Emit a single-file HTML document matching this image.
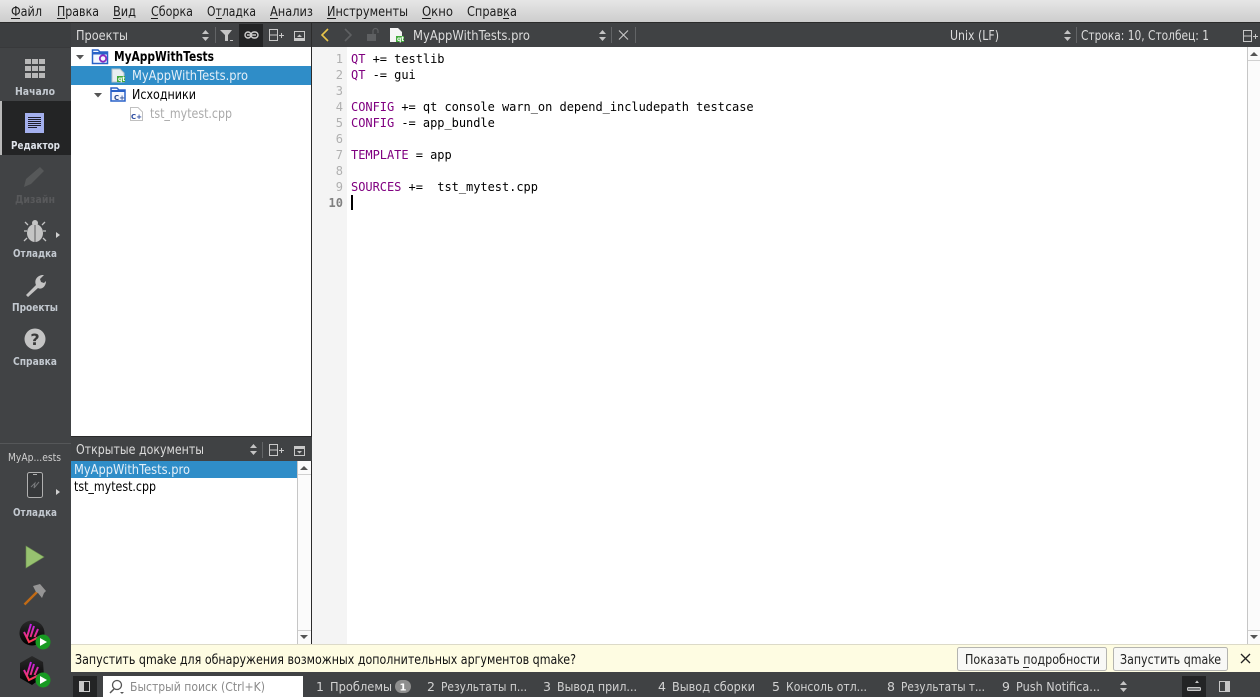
<!DOCTYPE html>
<html lang="ru"><head><meta charset="utf-8"><title>Qt Creator</title>
<style>
html,body{margin:0;padding:0;background:#fff;overflow:hidden}
svg{display:block;position:absolute;left:0;top:0}
text{font-family:"DejaVu Sans","Liberation Sans",sans-serif;font-size:13px;white-space:pre}
.m{fill:#1c1c1c}
.h{fill:#dcdcdc}
.l{fill:#c3c9d0;font-weight:bold;font-size:11px;text-anchor:start}
.c{font-family:"DejaVu Sans Mono","Liberation Mono",monospace;font-size:12px;fill:#000;letter-spacing:-.035px}
.k{fill:#800080}
.n{font-family:"DejaVu Sans Mono","Liberation Mono",monospace;font-size:12px;fill:#b0b0b0;text-anchor:end}
.s{fill:#d2d2d2;font-size:12.5px}
</style></head><body>
<svg width="1260" height="697" viewBox="0 0 1260 697" xmlns="http://www.w3.org/2000/svg">
<defs>
<linearGradient id="mb" x1="0" y1="0" x2="0" y2="1"><stop offset="0" stop-color="#e6e6e6"/><stop offset="1" stop-color="#cdcdcd"/></linearGradient>
<linearGradient id="lg" x1="0" y1="0" x2="0" y2="1"><stop offset="0" stop-color="#2a2a2a"/><stop offset="1" stop-color="#000"/></linearGradient>
<linearGradient id="kt" x1="0" y1="0" x2="0" y2="1"><stop offset="0" stop-color="#c020f0"/><stop offset="1" stop-color="#ff3a4a"/></linearGradient>
</defs>
<rect width="1260" height="697" fill="#fff"/>
<!-- menu -->
<rect width="1260" height="22" fill="url(#mb)"/>
<rect y="22" width="1260" height="1" fill="#2b2b2b"/>
<g class="m">
<text class="m" x="11" y="16" textLength="31" lengthAdjust="spacingAndGlyphs">Файл</text>
<text class="m" x="57" y="16" textLength="42" lengthAdjust="spacingAndGlyphs">Правка</text>
<text class="m" x="113" y="16" textLength="23" lengthAdjust="spacingAndGlyphs">Вид</text>
<text class="m" x="151" y="16" textLength="42" lengthAdjust="spacingAndGlyphs">Сборка</text>
<text class="m" x="207" y="16" textLength="49" lengthAdjust="spacingAndGlyphs">Отладка</text>
<text class="m" x="270" y="16" textLength="43" lengthAdjust="spacingAndGlyphs">Анализ</text>
<text class="m" x="327" y="16" textLength="81" lengthAdjust="spacingAndGlyphs">Инструменты</text>
<text class="m" x="422" y="16" textLength="31" lengthAdjust="spacingAndGlyphs">Окно</text>
<text class="m" x="467" y="16" textLength="50" lengthAdjust="spacingAndGlyphs">Справка</text>
<rect x="11" y="18" width="9" height="1"/><rect x="57" y="18" width="8" height="1"/><rect x="113" y="18" width="8" height="1"/><rect x="151" y="18" width="7" height="1"/><rect x="216" y="18" width="6" height="1"/><rect x="270" y="18" width="8" height="1"/><rect x="327" y="18" width="9" height="1"/><rect x="422" y="18" width="9" height="1"/><rect x="503" y="18" width="6" height="1"/>
</g>
<!-- sidebar -->
<rect y="23" width="71" height="674" fill="#414345"/>
<rect y="23" width="71" height="24" fill="#3c3e40"/>
<rect y="47" width="71" height="1" fill="#38393b"/>
<!-- home grid -->
<g fill="#b8b8b8">
<rect x="25" y="59" width="6" height="5"/><rect x="32" y="59" width="6" height="5"/><rect x="39" y="59" width="6" height="5"/>
<rect x="25" y="66" width="6" height="5"/><rect x="32" y="66" width="6" height="5"/><rect x="39" y="66" width="6" height="5"/>
<rect x="25" y="73" width="6" height="5"/><rect x="32" y="73" width="6" height="5"/><rect x="39" y="73" width="6" height="5"/>
</g>
<text class="l" x="15" y="95" textLength="40" lengthAdjust="spacingAndGlyphs">Начало</text>
<rect y="101" width="71" height="54" fill="#232425"/>
<rect y="101" width="2" height="54" fill="#b9b9b9"/>
<rect x="25" y="113" width="19" height="20" fill="#a4b0ee"/>
<g fill="#1d1d2b"><rect x="28" y="117" width="13" height="1"/><rect x="28" y="119" width="13" height="1"/><rect x="28" y="121" width="13" height="1"/><rect x="28" y="123" width="13" height="1"/><rect x="28" y="125" width="13" height="1"/><rect x="28" y="127" width="9" height="1"/></g>
<text class="l" x="11" y="149" textLength="49" lengthAdjust="spacingAndGlyphs" style="fill:#dfe3ea">Редактор</text>
<!-- design pencil -->
<path d="M24 187 L26 179 L40 167 L44 171 L31 184 Z" fill="#565859"/>
<text class="l" x="15" y="203" textLength="40" lengthAdjust="spacingAndGlyphs" style="fill:#58595b">Дизайн</text>
<!-- bug -->
<g fill="#c4c4c4"><ellipse cx="35" cy="233" rx="8" ry="9"/><circle cx="35" cy="223" r="3"/></g>
<path d="M35 225 V242" stroke="#414345" stroke-width=".8"/>
<path d="M28 225 L25 222 M27 231 H24 M27 238 L24 241 M42 225 L45 222 M43 231 H46 M43 238 L46 241" stroke="#c4c4c4" stroke-width="1.300" fill="none"/>
<path d="M56 232 L60 235 L56 238 Z" fill="#d0d0d0"/>
<text class="l" x="13" y="257" textLength="44" lengthAdjust="spacingAndGlyphs">Отладка</text>
<!-- wrench -->
<path d="M26 295 L36 285 C34 280 37 276 42 275 L44 275 L40 279 L41 282 L44 283 L46 281 C46 287 41 290 38 288 L28 297 Z" fill="#c4c4c4"/>
<text class="l" x="12" y="311" textLength="46" lengthAdjust="spacingAndGlyphs">Проекты</text>
<!-- help -->
<circle cx="35" cy="339" r="10.500" fill="#c4c4c4"/>
<text x="35" y="345" text-anchor="middle" style="font-size:16px;font-weight:bold;fill:#3a3a3a">?</text>
<text class="l" x="13" y="365" textLength="44" lengthAdjust="spacingAndGlyphs">Справка</text>
<rect y="443" width="71" height="1" fill="#555759"/>
<text x="8" y="461" textLength="53" lengthAdjust="spacingAndGlyphs" style="fill:#d0d0d0;font-size:11px">MyAp...ests</text>
<!-- device -->
<rect x="27.500" y="472.500" width="15" height="25" rx="2" fill="#36383a" stroke="#b0b0b0" stroke-width="1"/>
<rect x="33" y="474" width="4" height="1" fill="#b0b0b0"/>
<path d="M31 487 L35 483 L34 488 L39 482" stroke="#77797b" fill="none" stroke-width="1"/>
<path d="M56 489 L60 492 L56 495 Z" fill="#d0d0d0"/>
<text class="l" x="13" y="516" textLength="44" lengthAdjust="spacingAndGlyphs">Отладка</text>
<!-- run -->
<path d="M26 546 L44 557 L26 568 Z" fill="#97c270" stroke="#6d8f50" stroke-width=".6"/>
<!-- hammer -->
<path d="M24.500 604.500 L37 592" stroke="#c26b15" stroke-width="2.400"/>
<path d="M33 586 L40 584 L46 591 L44 593 L42 598 L38 593 L36 592 Z" fill="#959595"/>
<!-- kit 1 -->
<circle cx="32" cy="633" r="12.500" fill="url(#lg)"/>
<path d="M31 624 L27 637 M34 626 L30.500 637 M38 629 L34.500 637 M24 632 L29 642 L41 636" stroke="url(#kt)" stroke-width="2" fill="none"/>
<circle cx="43" cy="642" r="7.500" fill="#189a22"/><path d="M40 638 L47 642 L40 646 Z" fill="#fff"/>
<!-- kit 2 -->
<path d="M32 656 L43 662 L44 676 L32 685 L20 678 L20 663 Z" fill="url(#lg)"/>
<path d="M31 662 L27 675 M34 664 L30.500 675 M38 667 L34.500 675 M24 670 L29 680 L41 674" stroke="url(#kt)" stroke-width="2" fill="none"/>
<circle cx="43" cy="680" r="7.500" fill="#189a22"/><path d="M40 676 L47 680 L40 684 Z" fill="#fff"/>

<!-- top toolbar -->
<rect x="71" y="23" width="1189" height="24" fill="#404244"/>
<rect x="311" y="23" width="1" height="24" fill="#2b2b2b"/>
<text class="h" x="76" y="40" textLength="52" lengthAdjust="spacingAndGlyphs">Проекты</text>
<path d="M202 34 L205.500 30 L209 34 Z M202 37 L205.500 41 L209 37 Z" fill="#c4c4c4"/>
<rect x="215" y="27" width="1" height="16" fill="#626466"/>
<path d="M220 30 H232 L228 35 V41 H225 V35 Z" fill="#c4c4c4"/><rect x="230" y="40" width="3" height="1" fill="#c4c4c4"/>
<rect x="239" y="24" width="24" height="23" fill="#232425"/>
<rect x="245" y="32" width="6" height="6" rx="3" fill="none" stroke="#d0d0d0" stroke-width="1.400"/><rect x="251" y="32" width="7" height="6" rx="3" fill="none" stroke="#d0d0d0" stroke-width="1.400"/><rect x="247" y="34.300" width="9" height="1.400" fill="#d0d0d0"/>
<g fill="none" stroke="#c8c8c8"><rect x="269.500" y="29.500" width="8" height="11"/><path d="M269.500 35 H277.500 M279 35.500 H284 M281.500 33 V38"/>
<rect x="294.500" y="31.500" width="10" height="9"/></g>
<rect x="295" y="38" width="9" height="2" fill="#c8c8c8"/><path d="M297 37 H302 L299.500 34.500 Z" fill="#c8c8c8"/>
<rect x="311" y="47" width="1" height="597" fill="#2b2b2b"/>
<!-- editor bar -->
<path d="M328 29 L322 35 L328 41" fill="none" stroke="#e8c54a" stroke-width="1.600"/>
<path d="M345 29 L351 35 L345 41" fill="none" stroke="#5e6062" stroke-width="1.600"/>
<rect x="367" y="34" width="9" height="7" fill="#5e6062"/><path d="M373 34 V31 A2.500 2.500 0 0 1 378 31 V33" fill="none" stroke="#5e6062" stroke-width="1.200"/>
<path d="M390 28 H398 L402 32 V42 H390 Z" fill="#f5f5f5"/><rect x="396" y="36" width="8" height="6" fill="#41a83a"/>
<text x="397" y="41" style="font-size:6px;font-weight:bold;fill:#fff">qt</text>
<text class="h" x="413" y="40" textLength="117" lengthAdjust="spacingAndGlyphs">MyAppWithTests.pro</text>
<path d="M599 34 L602.500 30 L606 34 Z M599 37 L602.500 41 L606 37 Z" fill="#c4c4c4"/>
<rect x="611" y="27" width="1" height="16" fill="#626466"/>
<path d="M619 30.500 L628 39.500 M628 30.500 L619 39.500" stroke="#c8c8c8" stroke-width="1.100"/>
<rect x="635" y="27" width="1" height="16" fill="#626466"/>
<text class="h" x="950" y="40" textLength="49" lengthAdjust="spacingAndGlyphs">Unix (LF)</text>
<path d="M1064 34 L1067.500 30 L1071 34 Z M1064 37 L1067.500 41 L1071 37 Z" fill="#c4c4c4"/>
<rect x="1076" y="27" width="1" height="16" fill="#626466"/>
<text class="h" x="1081" y="40" textLength="128" lengthAdjust="spacingAndGlyphs">Строка: 10, Столбец: 1</text>
<g fill="none" stroke="#c8c8c8"><rect x="1243.500" y="30.500" width="8" height="11"/><path d="M1243.500 36 H1251.500 M1253 36.500 H1258 M1255.500 34 V39"/></g>

<!-- tree -->
<rect x="71" y="66" width="240" height="19" fill="#2f8dc8"/>
<path d="M76 55 H84 L80 59.500 Z" fill="#555"/>
<path d="M92.500 50 H98 L100 52 H107.500 V63.500 H92.500 Z" fill="#f4f7ff" stroke="#2a62c8" stroke-width="1.500"/><rect x="92" y="52" width="16" height="2.500" fill="#2a62c8"/>
<circle cx="103" cy="58.500" r="3.200" fill="none" stroke="#8a2bc0" stroke-width="1.800"/>
<text x="114" y="61" textLength="100" lengthAdjust="spacingAndGlyphs" style="font-weight:bold;fill:#000">MyAppWithTests</text>
<path d="M112 69 H120 L124 73 V82 H112 Z" fill="#e8eef0" stroke="#b9c3c9"/><rect x="117" y="76" width="8" height="6" fill="#41a83a"/>
<text x="118" y="81" style="font-size:6px;font-weight:bold;fill:#fff">qt</text>
<text x="132" y="80" textLength="116" lengthAdjust="spacingAndGlyphs" style="fill:#e4eff8">MyAppWithTests.pro</text>
<path d="M94 93 H102 L98 97.500 Z" fill="#555"/>
<path d="M111 88 H117 L119 90 H125 V101 H111 Z" fill="#f4f7ff" stroke="#2a62c8" stroke-width="1.500"/><rect x="111" y="90" width="14" height="2" fill="#2a62c8"/>
<text x="114" y="100" style="font-size:7px;font-weight:bold;fill:#2a4a90">C+</text>
<text x="132" y="99" textLength="64" lengthAdjust="spacingAndGlyphs" style="fill:#000">Исходники</text>
<path d="M130.500 107.500 H138 L142.500 112 V120.500 H130.500 Z" fill="#fff" stroke="#c0c0c0"/>
<text x="131" y="119" style="font-size:7px;font-weight:bold;fill:#2a4aa0">C+</text>
<text x="150" y="118" textLength="82" lengthAdjust="spacingAndGlyphs" style="fill:#aaa">tst_mytest.cpp</text>

<!-- open docs -->
<rect x="71" y="436" width="241" height="25" fill="#404244"/>
<rect x="71" y="436" width="241" height="1" fill="#2b2b2b"/>
<text class="h" x="76" y="454" textLength="128" lengthAdjust="spacingAndGlyphs">Открытые документы</text>
<path d="M250 448 L253.500 444 L257 448 Z M250 451 L253.500 455 L257 451 Z" fill="#c4c4c4"/>
<rect x="262" y="442" width="1" height="16" fill="#626466"/>
<g fill="none" stroke="#c8c8c8"><rect x="269.500" y="444.500" width="8" height="11"/><path d="M269.500 450 H277.500 M279 450.500 H284 M281.500 448 V453"/><rect x="294.500" y="446.500" width="10" height="9"/></g>
<rect x="295" y="447" width="9" height="2" fill="#c8c8c8"/><path d="M297 451 H302 L299.500 453.500 Z" fill="#c8c8c8"/>
<rect x="71" y="461" width="226" height="17" fill="#2f8dc8"/>
<text x="74" y="474" textLength="116" lengthAdjust="spacingAndGlyphs" style="fill:#e4eff8">MyAppWithTests.pro</text>
<text x="74" y="491" textLength="82" lengthAdjust="spacingAndGlyphs" style="fill:#000">tst_mytest.cpp</text>
<!-- list scrollbar -->
<rect x="297" y="461" width="14" height="183" fill="#fbfbfb"/>
<rect x="297" y="461" width="1" height="183" fill="#c6c6c6"/>
<rect x="298" y="474" width="13" height="1" fill="#d0d0d0"/><rect x="298" y="630" width="13" height="1" fill="#d0d0d0"/>
<path d="M300 470 L304 466 L308 470 Z M300 635 L304 639 L308 635 Z" fill="#555"/>

<!-- editor -->
<rect x="312" y="47" width="35" height="597" fill="#f4f4f4"/>
<g>
<text class="n" x="343" y="63">1</text><text class="n" x="343" y="79">2</text><text class="n" x="343" y="95">3</text><text class="n" x="343" y="111">4</text><text class="n" x="343" y="127">5</text><text class="n" x="343" y="143">6</text><text class="n" x="343" y="159">7</text><text class="n" x="343" y="175">8</text><text class="n" x="343" y="191">9</text><text class="n" x="343" y="207" style="font-weight:bold;fill:#808080">10</text>
</g>
<text class="c" x="351" y="63"><tspan class="k">QT</tspan> += testlib</text>
<text class="c" x="351" y="79"><tspan class="k">QT</tspan> -= gui</text>
<text class="c" x="351" y="111"><tspan class="k">CONFIG</tspan> += qt console warn_on depend_includepath testcase</text>
<text class="c" x="351" y="127"><tspan class="k">CONFIG</tspan> -= app_bundle</text>
<text class="c" x="351" y="159"><tspan class="k">TEMPLATE</tspan> = app</text>
<text class="c" x="351" y="191"><tspan class="k">SOURCES</tspan> +=  tst_mytest.cpp</text>
<rect x="351" y="195" width="2" height="15" fill="#000"/>
<!-- editor scrollbar -->
<rect x="1247" y="47" width="13" height="597" fill="#fbfbfb"/>
<rect x="1247" y="47" width="1" height="597" fill="#c6c6c6"/>
<rect x="1248" y="60" width="12" height="1" fill="#d0d0d0"/><rect x="1248" y="630" width="12" height="1" fill="#d0d0d0"/>
<path d="M1250 56 L1254 52 L1258 56 Z M1250 635 L1254 639 L1258 635 Z" fill="#555"/>

<!-- info bar -->
<rect x="71" y="644" width="1189" height="28" fill="#fefce2"/>
<rect x="71" y="644" width="1189" height="1" fill="#dcdac8"/>
<text x="75" y="664" textLength="501" lengthAdjust="spacingAndGlyphs" style="fill:#111">Запустить qmake для обнаружения возможных дополнительных аргументов qmake?</text>
<rect x="957.500" y="647.500" width="149" height="23" rx="2" fill="#f8f8f6" stroke="#b4b4b0"/>
<text x="965" y="664" textLength="135" lengthAdjust="spacingAndGlyphs" style="fill:#222">Показать подробности</text>
<rect x="1023" y="667" width="6" height="1" fill="#222"/>
<rect x="1113.500" y="647.500" width="114" height="23" rx="2" fill="#f8f8f6" stroke="#b4b4b0"/>
<text x="1120" y="664" textLength="101" lengthAdjust="spacingAndGlyphs" style="fill:#222">Запустить qmake</text>
<path d="M1241 654 L1250 663 M1250 654 L1241 663" stroke="#222" stroke-width="1.300"/>

<!-- status bar -->
<rect x="71" y="672" width="1189" height="25" fill="#404244"/>
<rect x="73" y="676" width="24" height="21" fill="#232425"/>
<rect x="79.500" y="681.500" width="10" height="10" fill="none" stroke="#c8c8c8"/><rect x="80" y="682" width="4" height="9" fill="#c8c8c8"/>
<rect x="103" y="676" width="200" height="21" fill="#fff"/>
<circle cx="117" cy="685" r="4.500" fill="none" stroke="#555" stroke-width="1.300"/><path d="M114 689 L110 693" stroke="#555" stroke-width="1.500"/><path d="M120 692 H124 L122 694 Z" fill="#555"/>
<text x="130" y="691" textLength="135" lengthAdjust="spacingAndGlyphs" style="fill:#8a8a8a;font-size:12.500px">Быстрый поиск (Ctrl+K)</text>
<g>
<text class="s" x="316" y="691">1</text><text class="s" x="330" y="691" textLength="62" lengthAdjust="spacingAndGlyphs">Проблемы</text>
<rect x="395" y="680" width="16" height="13" rx="6.500" fill="#8e8e8e"/><text x="403" y="690.500" text-anchor="middle" style="font-size:10px;font-weight:bold;fill:#fff">1</text>
<text class="s" x="427" y="691">2</text><text class="s" x="441" y="691" textLength="86" lengthAdjust="spacingAndGlyphs">Результаты п...</text>
<text class="s" x="543" y="691">3</text><text class="s" x="557" y="691" textLength="80" lengthAdjust="spacingAndGlyphs">Вывод прил...</text>
<text class="s" x="658" y="691">4</text><text class="s" x="672" y="691" textLength="83" lengthAdjust="spacingAndGlyphs">Вывод сборки</text>
<text class="s" x="772" y="691">5</text><text class="s" x="786" y="691" textLength="81" lengthAdjust="spacingAndGlyphs">Консоль отл...</text>
<text class="s" x="887" y="691">8</text><text class="s" x="901" y="691" textLength="84" lengthAdjust="spacingAndGlyphs">Результаты т...</text>
<text class="s" x="1002" y="691">9</text><text class="s" x="1016" y="691" textLength="84" lengthAdjust="spacingAndGlyphs">Push Notifica...</text>
</g>
<path d="M1120 685 L1123.500 681 L1127 685 Z M1120 688 L1123.500 692 L1127 688 Z" fill="#c4c4c4"/>
<rect x="1182" y="676" width="24" height="21" fill="#232425"/>
<rect x="1187.500" y="687.500" width="13" height="3" rx="1" fill="#77797b" stroke="#c8c8c8"/><path d="M1195 683 L1199 683 L1197 680.500 Z" fill="#c8c8c8"/>
<rect x="1219.500" y="681.500" width="10" height="10" fill="none" stroke="#c8c8c8"/><rect x="1225" y="682" width="4" height="9" fill="#c8c8c8"/>
</svg>
</body></html>
